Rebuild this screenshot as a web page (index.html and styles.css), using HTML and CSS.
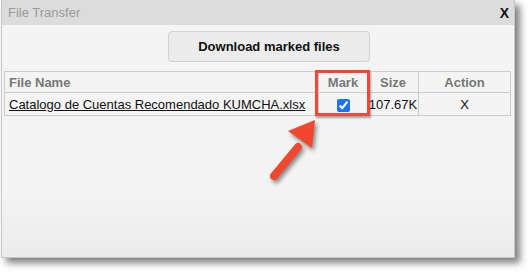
FILE: index.html
```html
<!DOCTYPE html>
<html lang="en">
<head>
  <meta charset="UTF-8" />
  <title>File Transfer</title>
  <link rel="stylesheet" href="styles.css">
</head>
<body>

  <div class="dialog">
    <div class="titlebar">
      <span class="title">File Transfer</span>
      <span class="close">X</span>
    </div>

    <div class="content">
      <div class="actions">
        <button type="button" class="download-btn">Download marked files</button>
      </div>

      <table class="files">
        <colgroup>
          <col class="c-name">
          <col class="c-mark">
          <col class="c-size">
          <col class="c-action">
        </colgroup>
        <thead>
          <tr>
            <th class="left">File Name</th>
            <th>Mark</th>
            <th>Size</th>
            <th>Action</th>
          </tr>
        </thead>
        <tbody>
          <tr>
            <td class="left"><a href="#">Catalogo de Cuentas Recomendado KUMCHA.xlsx</a></td>
            <td><input type="checkbox" checked></td>
            <td class="size">107.67K</td>
            <td>X</td>
          </tr>
        </tbody>
      </table>
    </div>

    <!-- annotation over the screenshot -->
    <div class="highlight"></div>
    <svg class="arrow" width="80" height="80" viewBox="0 0 80 80">
      <line x1="13" y1="56" x2="37" y2="27" stroke="#f2472f" stroke-width="8" stroke-linecap="round"/>
      <polygon points="54,0 27,11 51,28" fill="#f2472f"/>
    </svg>
  </div>

</body>
</html>
```

FILE: styles.css
```css
html, body {
  margin: 0;
  background: #fff;
}
body {
  font-family: "Liberation Sans", Arial, sans-serif;
  font-size: 13px;
  min-height: 274px;
}
.dialog {
  position: relative;
  margin-left: 1px;
  width: 512px;
  height: 257px;
  border: 1px solid #c6c6c6;
  border-top: none;
  background: linear-gradient(#f4f4f4 75%, #ebebeb);
  box-shadow: 5px 5px 7px rgba(0, 0, 0, 0.5);
}
.titlebar {
  height: 25px;
  background: #dcdcdc;
  display: flex;
  align-items: center;
  justify-content: space-between;
  padding: 0 5px 0 6px;
}
.title {
  color: #9a9a9a;
}
.close {
  font-weight: bold;
  font-size: 14px;
  color: #111;
}
.content {
  padding: 6px 2px 0 2px;
}
.actions {
  display: flex;
  padding-left: 164px;
  margin-bottom: 9px;
}
.download-btn {
  width: 202px;
  height: 31px;
  font-family: inherit;
  font-size: 13px;
  font-weight: bold;
  color: #111;
  background: #ececec;
  border: 1px solid #d2d2d2;
  border-radius: 4px;
}
.files {
  width: 507px;
  border-collapse: collapse;
  table-layout: fixed;
}
.c-name { width: 314px; }
.c-mark { width: 49px; }
.c-size { width: 51px; }
.files th, .files td {
  border: 1px solid #cbcbcb;
  text-align: center;
  padding: 0;
  white-space: nowrap;
}
.files th {
  height: 20px;
  color: #777;
  font-weight: bold;
}
.files td {
  height: 22px;
  color: #111;
}
.files .left {
  text-align: left;
  padding-left: 4px;
}
.files a {
  color: #111;
}
.files td.size {
  overflow: visible;
}
.files input {
  margin: 0;
  width: 13px;
  height: 13px;
  vertical-align: middle;
  accent-color: #1d72f0;
}
.highlight {
  position: absolute;
  left: 313px;
  top: 70px;
  width: 49px;
  height: 40px;
  border: 3px solid #f0493a;
  box-shadow: 1px 2px 2px rgba(0, 0, 0, 0.35);
}
.arrow {
  position: absolute;
  left: 259px;
  top: 120px;
  filter: drop-shadow(2px 3px 2px rgba(0, 0, 0, 0.45));
}
```
